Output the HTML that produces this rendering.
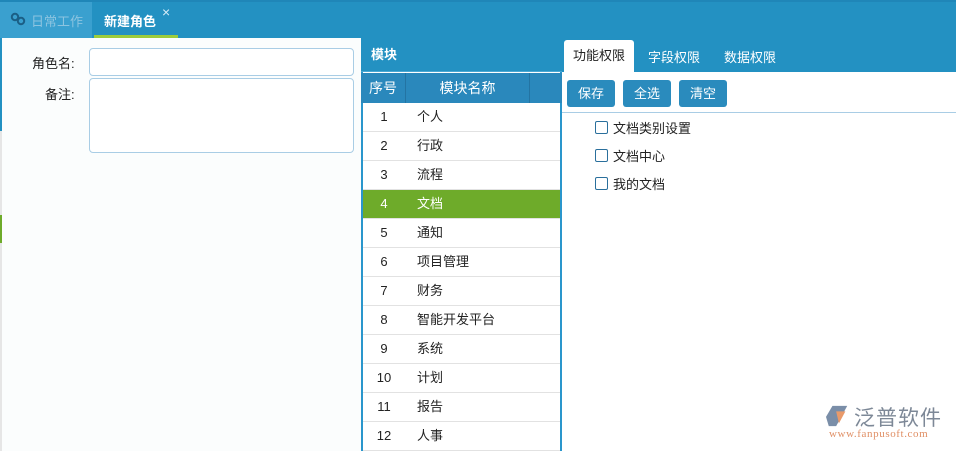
<!DOCTYPE html><html><head><meta charset="utf-8"><style>
*{margin:0;padding:0;box-sizing:border-box}
body{width:956px;height:451px;overflow:hidden;background:#fbfdfd;font-family:"Liberation Sans","Noto Sans CJK SC",sans-serif;font-size:13px;color:#222;position:relative}
.a{position:absolute}
.top{left:0;top:0;width:956px;height:38px;background:#2391c2;border-top:2px solid #1f86b8}
.row{position:absolute;left:363px;width:197px;height:29px;border-bottom:1px solid #e2e2e2;line-height:28px;background:#fff}
.row span{position:absolute}
.row .n{left:0;width:42px;text-align:center}
.row .t{left:54px}
.btn{position:absolute;top:80px;height:27px;background:#2a8bbd;color:#fff;border-radius:3px;font-size:13px;line-height:27px;text-align:center;width:48px}
.cb{position:absolute;left:595px;width:13px;height:13px;border:1px solid #2a6f9c;border-radius:2px;background:#fff}
.cl{position:absolute;left:613px;font-size:13px}
</style></head><body>
<div class="a top"></div>
<div class="a" style="left:0;top:2px;width:92px;height:36px;background:#3aa0cf"></div>
<svg class="a" style="left:10px;top:12px" width="16" height="14" viewBox="0 0 16 14"><circle cx="5" cy="5" r="3.2" fill="none" stroke="#1b5f86" stroke-width="2"/><circle cx="11" cy="9" r="3.2" fill="none" stroke="#1b5f86" stroke-width="2"/></svg>
<div class="a" style="left:31px;top:11px;color:#8cc4e0;font-size:13px">日常工作</div>
<div class="a" style="left:104px;top:11px;color:#fff;font-size:13px;font-weight:bold">新建角色</div>
<div class="a" style="left:162px;top:4px;color:#d6ecf7;font-size:14px">×</div>
<div class="a" style="left:94px;top:35px;width:84px;height:3px;background:#9ccc3c"></div>
<div class="a" style="left:0;top:38px;width:2px;height:413px;background:#e6e6e6"></div>
<div class="a" style="left:0;top:38px;width:2px;height:93px;background:#2391c2"></div>
<div class="a" style="left:0;top:215px;width:2px;height:28px;background:#6eab2a"></div>
<div class="a" style="left:32px;top:53px">角色名:</div>
<div class="a" style="left:45px;top:84px">备注:</div>
<div class="a" style="left:89px;top:48px;width:265px;height:28px;border:1px solid #a9cde5;border-radius:4px;background:#fff"></div>
<div class="a" style="left:89px;top:78px;width:265px;height:75px;border:1px solid #a9cde5;border-radius:4px;background:#fff"></div>
<div class="a" style="left:361px;top:38px;width:201px;height:413px;background:#fff;border-left:2px solid #2a96cc;border-right:2px solid #2a96cc"></div>
<div class="a" style="left:361px;top:38px;width:201px;height:34px;background:#2391c2;border-bottom:1px solid #4aa7d4;color:#fff;font-weight:bold;line-height:34px;padding-left:10px">模块</div>
<div class="a" style="left:361px;top:73px;width:201px;height:30px;background:#2a88bc;color:#fff;font-size:14px;line-height:30px">
<span class="a" style="left:0;width:45px;text-align:center;border-right:1px solid #2374a3;height:30px">序号</span>
<span class="a" style="left:45px;width:124px;text-align:center;border-right:1px solid #2374a3;height:30px">模块名称</span></div>
<div class="row" style="top:103px"><span class="n">1</span><span class="t">个人</span></div>
<div class="row" style="top:132px"><span class="n">2</span><span class="t">行政</span></div>
<div class="row" style="top:161px"><span class="n">3</span><span class="t">流程</span></div>
<div class="row" style="top:190px;background:#6eab2a;color:#fff"><span class="n">4</span><span class="t">文档</span></div>
<div class="row" style="top:219px"><span class="n">5</span><span class="t">通知</span></div>
<div class="row" style="top:248px"><span class="n">6</span><span class="t">项目管理</span></div>
<div class="row" style="top:277px"><span class="n">7</span><span class="t">财务</span></div>
<div class="row" style="top:306px"><span class="n">8</span><span class="t">智能开发平台</span></div>
<div class="row" style="top:335px"><span class="n">9</span><span class="t">系统</span></div>
<div class="row" style="top:364px"><span class="n">10</span><span class="t">计划</span></div>
<div class="row" style="top:393px"><span class="n">11</span><span class="t">报告</span></div>
<div class="row" style="top:422px"><span class="n">12</span><span class="t">人事</span></div>
<div class="a" style="left:562px;top:38px;width:394px;height:34px;background:#2391c2"></div>
<div class="a" style="left:564px;top:40px;width:70px;height:33px;background:#fff;border-radius:3px 3px 0 0;line-height:31px;text-align:center;color:#222">功能权限</div>
<div class="a" style="left:648px;top:47px;color:#fff">字段权限</div>
<div class="a" style="left:724px;top:47px;color:#fff">数据权限</div>
<div class="a" style="left:562px;top:72px;width:394px;height:379px;background:#fff"></div>
<div class="btn" style="left:567px">保存</div>
<div class="btn" style="left:623px">全选</div>
<div class="btn" style="left:679px">清空</div>
<div class="a" style="left:562px;top:112px;width:394px;height:1px;background:#a9cde5"></div>
<div class="cb" style="top:121px"></div><div class="cl" style="top:118px">文档类别设置</div>
<div class="cb" style="top:149px"></div><div class="cl" style="top:146px">文档中心</div>
<div class="cb" style="top:177px"></div><div class="cl" style="top:174px">我的文档</div>
<svg class="a" style="left:825px;top:404px" width="26" height="24" viewBox="0 0 28 26"><path d="M8 2h16l-12 22H4l-3-10z" fill="#7a8ea8"/><path d="M12 8h10l-7 13z" fill="#e99a6a"/></svg>
<div class="a" style="left:854px;top:402px;font-size:21px;color:#7d8897;letter-spacing:1px">泛普软件</div>
<div class="a" style="left:829px;top:428px;font-size:11px;color:#e08f65;font-family:'Liberation Serif',serif;letter-spacing:0.6px">www.fanpusoft.com</div>
</body></html>
